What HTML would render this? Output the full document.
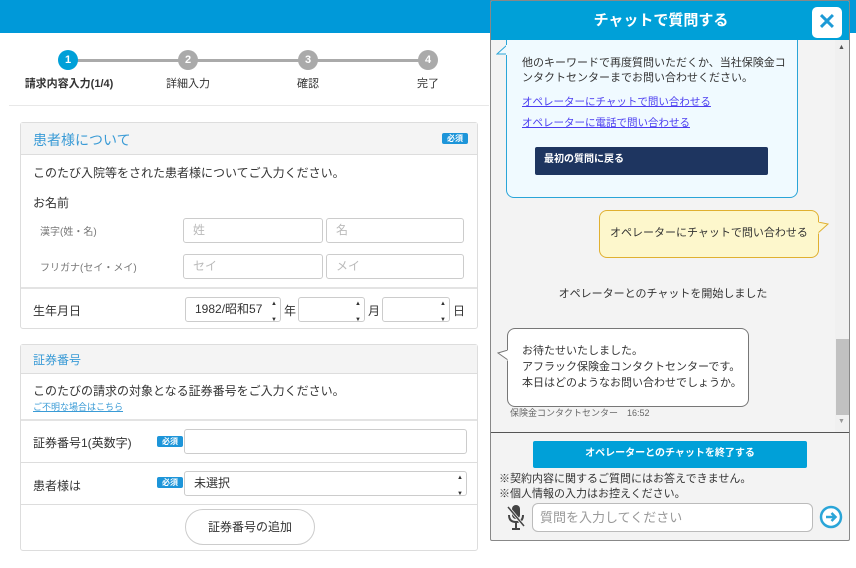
<!DOCTYPE html>
<html><head><meta charset="utf-8"><style>
*{box-sizing:border-box;margin:0;padding:0}
body{width:856px;height:568px;position:relative;overflow:hidden;background:#fff;font-family:"Liberation Sans","Noto Sans CJK JP",sans-serif;font-size:12px;color:#333}
.a{position:absolute}
.circ{position:absolute;width:20px;height:20px;border-radius:50%;background:#aaa;color:#fff;font-size:11px;font-weight:bold;text-align:center;line-height:20px}
.lbl{position:absolute;font-size:11px;color:#333;transform:translateX(-50%);white-space:nowrap}
.card{position:absolute;left:20px;width:458px;border:1px solid #ddd;border-radius:3px;background:#fff}
.inp{position:absolute;border:1px solid #ccc;border-radius:3px;background:#fff;font-size:12px;color:#bbb;padding-left:9px;line-height:23px}
.req{position:absolute;background:#1d95d9;color:#fff;font-size:8px;font-weight:bold;width:26px;height:11px;line-height:11px;text-align:center;border-radius:2px}
.hr{position:absolute;left:0;right:0;height:1px;background:#ddd}
.spin{position:absolute;right:3px;font-size:6px;color:#333;line-height:8px}
</style></head><body>
<div class="a" style="left:0;top:0;width:856px;height:33px;background:#0099d9"></div>
<div class="a" style="left:68px;top:59px;width:360px;height:3px;background:#aaa"></div>
<div class="circ" style="left:58px;top:50px;background:#00a0d8">1</div>
<div class="circ" style="left:178px;top:50px">2</div>
<div class="circ" style="left:298px;top:50px">3</div>
<div class="circ" style="left:418px;top:50px">4</div>
<div class="lbl" style="left:69px;top:75px;font-weight:bold">請求内容入力(1/4)</div>
<div class="lbl" style="left:188px;top:75px">詳細入力</div>
<div class="lbl" style="left:308px;top:75px">確認</div>
<div class="lbl" style="left:428px;top:75px">完了</div>
<div class="a" style="left:9px;top:105px;width:480px;height:1px;background:#e8e8e8"></div>
<div class="card" style="top:122px;height:207px">
 <div class="a" style="left:0;top:0;right:0;height:32px;background:#f4f4f4;border-bottom:1px solid #ddd"></div>
 <div class="a" style="left:12px;top:7px;font-size:14px;color:#3a9bd6">患者様について</div>
 <div class="req" style="left:421px;top:10px">必須</div>
 <div class="a" style="left:12px;top:41px">このたび入院等をされた患者様についてご入力ください。</div>
 <div class="a" style="left:12px;top:71px">お名前</div>
 <div class="a" style="left:19px;top:100px;font-size:10px;color:#777">漢字(姓・名)</div>
 <div class="inp" style="left:162px;top:95px;width:140px;height:25px">姓</div>
 <div class="inp" style="left:305px;top:95px;width:138px;height:25px">名</div>
 <div class="a" style="left:19px;top:136px;font-size:10px;color:#777">フリガナ(セイ・メイ)</div>
 <div class="inp" style="left:162px;top:131px;width:140px;height:25px">セイ</div>
 <div class="inp" style="left:305px;top:131px;width:138px;height:25px">メイ</div>
 <div class="hr" style="top:164px;height:2px;background:#e3e3e3"></div>
 <div class="a" style="left:12px;top:179px">生年月日</div>
 <div class="inp" style="left:164px;top:174px;width:96px;height:25px;color:#333">1982/昭和57<span class="spin" style="top:2px">▲<br><br>▼</span></div>
 <div class="a" style="left:263px;top:179px">年</div>
 <div class="inp" style="left:277px;top:174px;width:67px;height:25px"><span class="spin" style="top:2px">▲<br><br>▼</span></div>
 <div class="a" style="left:347px;top:179px">月</div>
 <div class="inp" style="left:361px;top:174px;width:68px;height:25px"><span class="spin" style="top:2px">▲<br><br>▼</span></div>
 <div class="a" style="left:432px;top:179px">日</div>
</div>
<div class="card" style="top:344px;height:207px">
 <div class="a" style="left:0;top:0;right:0;height:29px;background:#f4f4f4;border-bottom:1px solid #ddd"></div>
 <div class="a" style="left:12px;top:6px;color:#3a9bd6">証券番号</div>
 <div class="a" style="left:12px;top:37px">このたびの請求の対象となる証券番号をご入力ください。</div>
 <div class="a" style="left:12px;top:55px;font-size:9px;color:#3a9bd6;text-decoration:underline">ご不明な場合はこちら</div>
 <div class="hr" style="top:74px;height:2px;background:#e3e3e3"></div>
 <div class="a" style="left:12px;top:89px">証券番号1(英数字)</div>
 <div class="req" style="left:136px;top:91px">必須</div>
 <div class="inp" style="left:163px;top:84px;width:283px;height:25px"></div>
 <div class="hr" style="top:117px"></div>
 <div class="a" style="left:12px;top:132px">患者様は</div>
 <div class="req" style="left:136px;top:132px">必須</div>
 <div class="inp" style="left:163px;top:126px;width:283px;height:25px;color:#333">未選択<span class="spin" style="top:2px">▲<br><br>▼</span></div>
 <div class="hr" style="top:159px"></div>
 <div class="a" style="left:164px;top:164px;width:130px;height:36px;border:1px solid #ccc;border-radius:18px;text-align:center;line-height:34px">証券番号の追加</div>
</div>
<div class="a" style="left:490px;top:0;width:360px;height:541px;border:1px solid #888;border-radius:2px;background:#f3f3f3;overflow:hidden">
 <div class="a" style="left:344px;top:39px;width:14px;height:392px;background:#f0f0f0"></div>
 <div class="a" style="left:345px;top:338px;width:13px;height:76px;background:#c1c1c1"></div>
 <div class="a" style="left:347px;top:43px;font-size:7px;color:#555">▲</div>
 <div class="a" style="left:347px;top:417px;font-size:7px;color:#999">▼</div>
 <div class="a" style="left:15px;top:20px;width:292px;height:177px;background:#f0faff;border:1px solid #2aa5d8;border-radius:8px"></div>
 <svg class="a" style="left:5px;top:44px" width="12" height="12"><path d="M11 0L1 9L11 9" fill="#f0faff" stroke="#2aa5d8"/><rect x="10" y="0" width="3" height="10" fill="#f0faff"/></svg>
 <div class="a" style="left:0;top:0;right:0;height:39px;background:#00a0d8;color:#fff;font-size:15px;font-weight:bold;text-align:center;line-height:39px;padding-right:18px">チャットで質問する</div>
 <div class="a" style="left:321px;top:6px;width:30px;height:31px;background:#fff;border-radius:5px;color:#1d9ad6;font-size:22px;text-align:center;line-height:30px;font-weight:bold">✕</div>
 <div class="a" style="left:31px;top:55px;font-size:11px;line-height:15px;color:#333">他のキーワードで再度質問いただくか、当社保険金コ<br>ンタクトセンターまでお問い合わせください。</div>
 <div class="a" style="left:31px;top:93px;font-size:10.5px;color:#4a3cf0;text-decoration:underline">オペレーターにチャットで問い合わせる</div>
 <div class="a" style="left:31px;top:114px;font-size:10.5px;color:#4a3cf0;text-decoration:underline">オペレーターに電話で問い合わせる</div>
 <div class="a" style="left:44px;top:146px;width:233px;height:28px;background:#1e3560;border-radius:2px;color:#fff;font-size:10px;font-weight:bold;line-height:26px;padding-left:9px">最初の質問に戻る</div>
 <div class="a" style="left:108px;top:209px;width:220px;height:48px;background:#fdf7cc;border:1px solid #e0b030;border-radius:8px;text-align:center;line-height:45px;font-size:11px">オペレーターにチャットで問い合わせる</div>
 <svg class="a" style="left:327px;top:221px" width="12" height="12"><path d="M0 0L10 2L0 11" fill="#fdf7cc" stroke="#e0b030"/><rect x="-2" y="0" width="2.5" height="12" fill="#fdf7cc"/></svg>
 <div class="a" style="left:0;width:344px;top:284px;text-align:center;font-size:11px">オペレーターとのチャットを開始しました</div>
 <div class="a" style="left:16px;top:327px;width:242px;height:79px;background:#fff;border:1px solid #777;border-radius:8px"></div>
 <svg class="a" style="left:6px;top:349px" width="12" height="12"><path d="M11 0L1 3L11 10" fill="#fff" stroke="#777"/><rect x="10.5" y="0" width="3" height="11" fill="#fff"/></svg>
 <div class="a" style="left:31px;top:342px;font-size:11px;line-height:16px">お待たせいたしました。<br>アフラック保険金コンタクトセンターです。<br>本日はどのようなお問い合わせでしょうか。</div>
 <div class="a" style="left:19px;top:405px;font-size:9px;color:#666">保険金コンタクトセンター　16:52</div>
 <div class="a" style="left:0;right:0;top:431px;height:1px;background:#555"></div>
 <div class="a" style="left:42px;top:440px;width:274px;height:27px;background:#00a0d8;border-radius:2px;color:#fff;font-size:10px;font-weight:bold;text-align:center;line-height:26px">オペレーターとのチャットを終了する</div>
 <div class="a" style="left:8px;top:471px;font-size:11px;line-height:15px">※契約内容に関するご質問にはお答えできません。<br>※個人情報の入力はお控えください。</div>
 <svg class="a" style="left:15px;top:503px" width="20" height="27" viewBox="0 0 20 27"><rect x="6" y="1" width="8" height="14" rx="4" fill="#444"/><path d="M3 11q0 7 7 7q7 0 7-7M10 18v6M6 25h8" stroke="#444" stroke-width="2" fill="none"/><path d="M2 3L18 22" stroke="#f3f3f3" stroke-width="3"/><path d="M2 3L18 22" stroke="#444" stroke-width="1.5"/></svg>
 <div class="a" style="left:41px;top:502px;width:281px;height:29px;background:#fff;border:1px solid #bbb;border-radius:6px;font-size:13px;color:#999;line-height:27px;padding-left:7px">質問を入力してください</div>
 <svg class="a" style="left:328px;top:504px" width="24" height="24" viewBox="0 0 24 24"><circle cx="12" cy="12" r="10" fill="#fff" stroke="#2aa5d8" stroke-width="2.5"/><path d="M7 12h9M12.5 8l4 4-4 4" stroke="#2aa5d8" stroke-width="2.5" fill="none"/></svg>
</div>
</body></html>
